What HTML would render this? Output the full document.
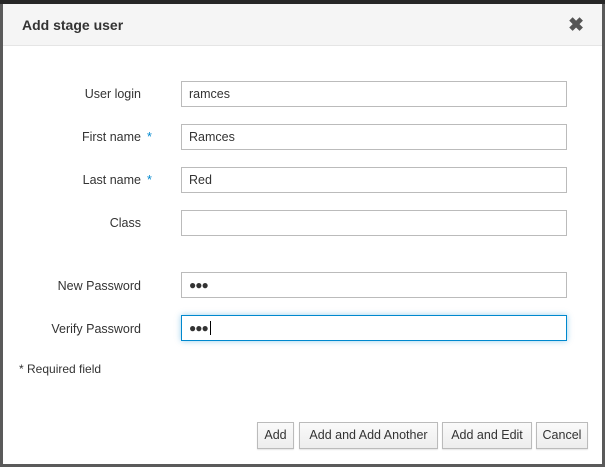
<!DOCTYPE html><html><head><style>
body{margin:0;width:605px;height:467px;background:#5a5a5a;font-family:"Liberation Sans",sans-serif;overflow:hidden;position:relative}
.top{position:absolute;left:0;top:0;width:605px;height:4px;background:#262626}
.m{position:absolute;left:3px;top:4px;width:599px;height:460px;background:#fff}
.h{height:41px;background:#f5f5f5;border-bottom:1px solid #e5e5e5}
.h b{position:absolute;left:19px;top:13px;font-size:14px;color:#333}
.x{position:absolute;right:18px;top:10px;font-size:19px;font-weight:bold;color:#555}
.l{position:absolute;right:461px;font-size:12.5px;color:#333;text-align:right}
.l i{color:#0088ce;font-style:normal;position:absolute;left:100%;margin-left:6px}
.in{position:absolute;left:178px;font-size:12.5px;color:#333;line-height:24px;padding-left:7px;box-sizing:border-box;width:386px;height:26px;border:1px solid #bbb}
.f{border-color:#0088ce;box-shadow:0 0 6px rgba(0,136,206,.4)}
.d{letter-spacing:-1px;font-size:12px}
.btn{position:absolute;top:418px;height:27px;border:1px solid #bbb;background:linear-gradient(#fafafa,#ededed);box-sizing:border-box;font-size:12.5px;color:#333;line-height:25px;text-align:center;box-shadow:0 1px 1px rgba(0,0,0,.1)}
</style></head><body><div class="top"></div>
<div class="m"><div class="h"><b>Add stage user</b><span class="x">✖</span></div>
<div class="l" style="top:83px">User login</div><div class="in" style="top:77px">ramces</div>
<div class="l" style="top:126px">First name<i>*</i></div><div class="in" style="top:120px">Ramces</div>
<div class="l" style="top:169px">Last name<i>*</i></div><div class="in" style="top:163px">Red</div>
<div class="l" style="top:212px">Class</div><div class="in" style="top:206px"></div>
<div class="l" style="top:275px">New Password</div><div class="in d" style="top:268px">●●●</div>
<div class="l" style="top:318px">Verify Password</div><div class="in d f" style="top:311px">●●●<span style="border-left:1px solid #000;margin-left:2px"></span></div>
<div style="position:absolute;left:16px;top:358px;font-size:12px;color:#333">* Required field</div>
<div class="btn" style="left:254px;width:37px">Add</div>
<div class="btn" style="left:296px;width:139px">Add and Add Another</div>
<div class="btn" style="left:439px;width:90px">Add and Edit</div>
<div class="btn" style="left:533px;width:52px">Cancel</div>
</div></body></html>
